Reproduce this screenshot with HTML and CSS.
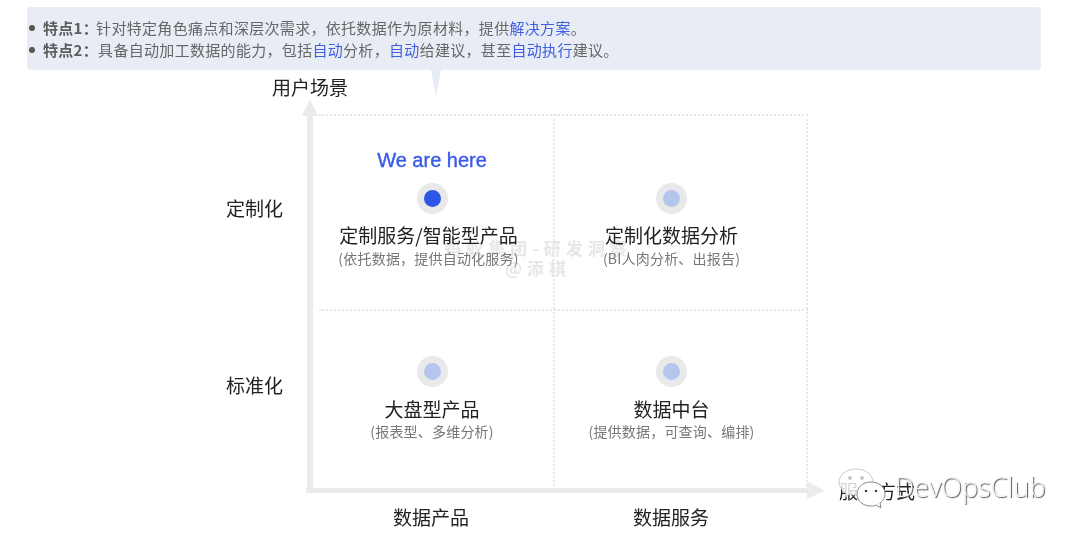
FILE: index.html
```html
<!DOCTYPE html>
<html lang="zh">
<head>
<meta charset="utf-8">
<title>用户场景</title>
<link rel="stylesheet" href="styles.css">
</head>
<body>
<main class="page">
  <section class="banner">
    <ul class="points">
      <li><b class="tight">特点1：</b>针对特定角色痛点和深层次需求，依托数据作为原材料，提供<span class="hl">解决方案</span>。</li>
      <li><b>特点2：</b>具备自动加工数据的能力，包括<span class="hl">自动</span>分析，<span class="hl">自动</span>给建议，甚至<span class="hl">自动执行</span>建议。</li>
    </ul>
  </section>
  <section class="chart">
    <div class="stamp">蚂蚁集团-研发洞察<br>@添棋</div>
    <div class="y-title">用户场景</div>
    <div class="row-label row-a">定制化</div>
    <div class="cell cell-a cell-l cell-top">
      <div class="note">We are here</div>
      <span class="dot dot-on"></span>
      <div class="name shift">定制服务/智能型产品</div>
      <div class="sub shift">(依托数据，提供自动化服务)</div>
    </div>
    <div class="cell cell-a cell-r">
      <span class="dot"></span>
      <div class="name">定制化数据分析</div>
      <div class="sub">(BI人肉分析、出报告)</div>
    </div>
    <div class="row-label row-b">标准化</div>
    <div class="cell cell-b cell-l">
      <span class="dot"></span>
      <div class="name">大盘型产品</div>
      <div class="sub">(报表型、多维分析)</div>
    </div>
    <div class="cell cell-b cell-r">
      <span class="dot"></span>
      <div class="name">数据中台</div>
      <div class="sub">(提供数据，可查询、编排)</div>
    </div>
    <div class="x-label x-l">数据产品</div>
    <div class="x-label x-r">数据服务</div>

    <svg class="axes" width="530" height="412" viewBox="0 0 530 412" aria-hidden="true">
      <path d="M10 9 L18 26 H13 V403 H7 V26 H2 Z" fill="#ebebeb"/>
      <path d="M6 398 H507 V392 L525 400.500 L507 409 V403 H6 Z" fill="#ebebeb"/>
    </svg>
    <div class="x-title">服务方式</div>
  </section>
  <div class="brand">
    <svg class="wechat" width="52" height="42" viewBox="0 0 52 42" aria-hidden="true">
      <path d="M18 1 C8 1 1 7 1 14 C1 19 4 22 8 25 L7 29 L12 26 C14 27 17 27 20 27 C29 27 35 21 35 14 C35 7 28 1 18 1 Z" fill="#ffffff" fill-opacity="0.82" stroke="#c9c9c9"/>
      <circle cx="12" cy="10" r="1.300" fill="none" stroke="#aaa"/>
      <circle cx="24" cy="10" r="1.300" fill="none" stroke="#aaa"/>
      <path d="M33 14 C25 14 19 19 19 26 C19 33 25 38 33 38 C35 38 37 38 38 37 L43 40 L42 35 C45 33 47 30 47 26 C47 19 41 14 33 14 Z" fill="#ffffff" stroke="#8a8a8a"/>
      <circle cx="28" cy="23" r="1.300" fill="#444"/>
      <circle cx="38" cy="23" r="1.300" fill="#444"/>
    </svg>
    <span class="brand-name">DevOpsClub</span>
  </div>
</main>
</body>
</html>
```
FILE: styles.css
```css
* { box-sizing: border-box; }
html, body { margin: 0; padding: 0; background: #fff; }
body {
  width: 1080px;
  height: 540px;
  overflow: hidden;
  font-family: "Noto Sans CJK SC", "Liberation Sans", sans-serif;
}
.page {
  position: relative;
  width: 1080px;
  height: 540px;
  padding-top: 7px;
  filter: blur(0.45px);
}
.banner {
  position: relative;
  width: 1014px;
  height: 63px;
  margin-left: 27px;
  background: #e8ecf5;
  border-radius: 4px;
  padding-top: 10px;
  color: #666;
  font-size: 15px;
  line-height: 22px;
  letter-spacing: 0.31px;
}
.banner::after {
  content: "";
  position: absolute;
  left: 404px;
  top: 63px;
  border-left: 5.500px solid transparent;
  border-right: 5.500px solid transparent;
  border-top: 27px solid #e8ecf5;
}
.points { margin: 0; padding: 0 0 0 16px; list-style: none; }
.points li { position: relative; white-space: nowrap; }
.points li::before {
  content: "";
  position: absolute;
  left: -14px;
  top: 8px;
  width: 6px;
  height: 6px;
  border-radius: 50%;
  background: #555;
}
.points b { font-weight: 700; color: #5c5c5c; }
.points .tight { margin-right: -2px; }
.hl { color: #3f5fe0; }

.chart {
  display: grid;
  grid-template-columns: 315px 240px 253px;
  grid-template-rows: 44px 195px 181px 50px;
  position: relative;
  color: #222;
}
.y-title {
  grid-column: 1 / 3;
  padding: 3px 0 0 272px;
  font-size: 19px;
  line-height: 28px;
  color: #222;
}
.row-label {
  grid-column: 1;
  padding-left: 226px;
  font-size: 19px;
  line-height: 28px;
}
.row-a { padding-top: 80px; }
.row-b { padding-top: 62px; }
.cell {
  position: relative;
  display: flex;
  flex-direction: column;
  align-items: center;
  border-top: 2px dotted #e8e8e8;
}
.cell-a { padding-top: 67px; }
.cell-b { padding-top: 45px; }
.cell-top { padding-top: 33px; }
.cell-l { margin-left: 4px; padding-right: 8px; border-right: 2px dotted #e8e8e8; }
.cell-r { padding-right: 18px; border-right: 2px dotted #e8e8e8; }
.note {
  height: 34px;
  color: #3a5be8;
  font-family: "Liberation Sans", sans-serif;
  font-size: 20px;
  line-height: 23px;
  -webkit-text-stroke: 0.4px #3a5be8;
}
.dot {
  display: flex;
  width: 31px;
  height: 31px;
  flex: none;
  align-items: center;
  justify-content: center;
  border-radius: 50%;
  background: #e9e9e9;
}
.dot::after {
  content: "";
  width: 17px;
  height: 17px;
  border-radius: 50%;
  background: #b5c6ee;
}
.dot-on::after { background: #2f55e6; }
.name {
  margin-top: 8px;
  font-size: 19px;
  line-height: 28px;
  white-space: nowrap;
}
.cell-a .name { margin-top: 7px; }
.cell-b .sub { margin-top: -1px; }
.sub {
  font-size: 14px;
  line-height: 18px;
  letter-spacing: 0.2px;
  color: #777;
  white-space: nowrap;
}
.shift { margin-right: 7px; }
.x-label {
  font-size: 19px;
  line-height: 28px;
  padding-top: 13px;
  text-align: center;
}
.x-l { grid-column: 2; padding-right: 8px; }
.x-r { grid-column: 3; padding-right: 21px; }
.axes {
  position: absolute;
  left: 300px;
  top: 20px;
}
.x-title {
  position: absolute;
  left: 839px;
  top: 407px;
  font-size: 19px;
  line-height: 28px;
  color: #222;
}
.stamp {
  position: absolute;
  left: 438px;
  top: 168px;
  width: 200px;
  color: #e7e7e7;
  font-size: 17px;
  font-weight: 700;
  line-height: 20px;
  letter-spacing: 5px;
  text-align: center;
  white-space: nowrap;
}
.brand {
  position: absolute;
  left: 838px;
  top: 468px;
  display: flex;
  align-items: flex-start;
}
.wechat { flex: none; }
.brand-name {
  margin: 1px 0 0 5px;
  font-family: "Open Sans", sans-serif;
  font-weight: 300;
  font-size: 27px;
  line-height: 36px;
  color: #f6f6f6;
  text-shadow: 1px 1px 1px #555;
}
```
